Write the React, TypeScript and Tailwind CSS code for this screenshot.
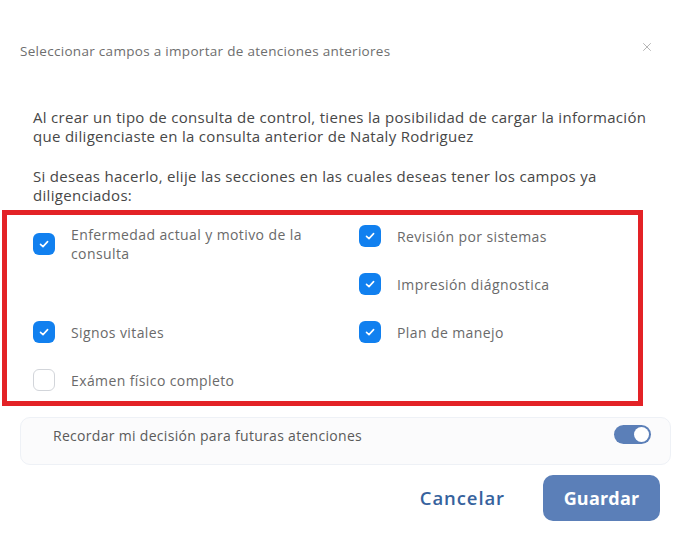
import { X } from "lucide-react";

const font = { fontFamily: '"Open Sans", "Noto Sans", sans-serif' };

function Check({ checked, label }: { checked: boolean; label: string }) {
  return (
    <div className="flex items-center gap-4">
      {checked ? (
        <span className="flex h-[22px] w-[22px] shrink-0 items-center justify-center rounded-[6px] bg-[#1180ef]">
          <svg width="12" height="12" viewBox="0 0 12 12" fill="none">
            <path d="M2.5 6.3 L5 8.6 L9.6 3.6" stroke="white" strokeWidth="1.6" strokeLinecap="round" strokeLinejoin="round" />
          </svg>
        </span>
      ) : (
        <span className="h-[22px] w-[22px] shrink-0 rounded-[6px] border border-[#d2d5da] bg-white" />
      )}
      <span className="text-[14px] leading-[19px] tracking-[0.4px] text-[#6a6a6a]">{label}</span>
    </div>
  );
}

export default function App() {
  return (
    <div className="h-[533px] w-[688px] overflow-hidden bg-white" style={font}>
      <div className="flex items-start justify-between pl-[20px] pr-[34px] pt-[42px]">
        <h1 className="text-[13.5px] leading-[18px] tracking-[0.3px] text-[#6e6e6e]">
          Seleccionar campos a importar de atenciones anteriores
        </h1>
        <X className="mt-[-2px] h-[14px] w-[14px] text-[#b0b0b0]" strokeWidth={1.6} />
      </div>

      <div className="w-[650px] pl-[33px] text-[15px] leading-[19px] tracking-[0.3px] text-[#474747]">
        <p className="mt-[48px]">
          Al crear un tipo de consulta de control, tienes la posibilidad de cargar la información que
          diligenciaste en la consulta anterior de Nataly Rodriguez
        </p>
        <p className="mt-[21px]">
          Si deseas hacerlo, elije las secciones en las cuales deseas tener los campos ya diligenciados:
        </p>
      </div>

      <div className="ml-[2px] mt-[5px] h-[196px] w-[641px] border-[5px] border-[#e32226] pl-[26px] pt-[10px]">
        <div className="flex">
          <div className="flex w-[326px] flex-col">
            <div className="w-[290px]">
              <Check checked label="Enfermedad actual y motivo de la consulta" />
            </div>
            <div className="mt-[58px] flex flex-col gap-[26px]">
              <Check checked label="Signos vitales" />
              <Check checked={false} label="Exámen físico completo" />
            </div>
          </div>
          <div className="flex flex-col gap-[26px]">
            <Check checked label="Revisión por sistemas" />
            <Check checked label="Impresión diágnostica" />
            <Check checked label="Plan de manejo" />
          </div>
        </div>
      </div>

      <div className="ml-[20px] mt-[11px] flex h-[48px] w-[651px] items-start justify-between rounded-[10px] border border-[#eef1f6] bg-[#fbfbfc] pl-[32px] pr-[19px] pt-[6px]">
        <span className="text-[14px] leading-[24px] tracking-[0.3px] text-[#5a5a5a]">
          Recordar mi decisión para futuras atenciones
        </span>
        <span className="relative mt-[1px] h-[19px] w-[37px] rounded-full bg-[#5b7fb8]">
          <span className="absolute right-[2px] top-[2px] h-[15px] w-[15px] rounded-full bg-white" />
        </span>
      </div>

      <div className="mt-[10px] flex items-center justify-end pr-[28px]">
        <button className="mr-[38px] text-[18.5px] font-semibold tracking-[0.9px] text-[#36629d]">Cancelar</button>
        <button className="h-[46px] w-[117px] rounded-[10px] bg-[#5b7fb8] text-[18px] font-bold tracking-[0.2px] text-white">
          Guardar
        </button>
      </div>
    </div>
  );
}
